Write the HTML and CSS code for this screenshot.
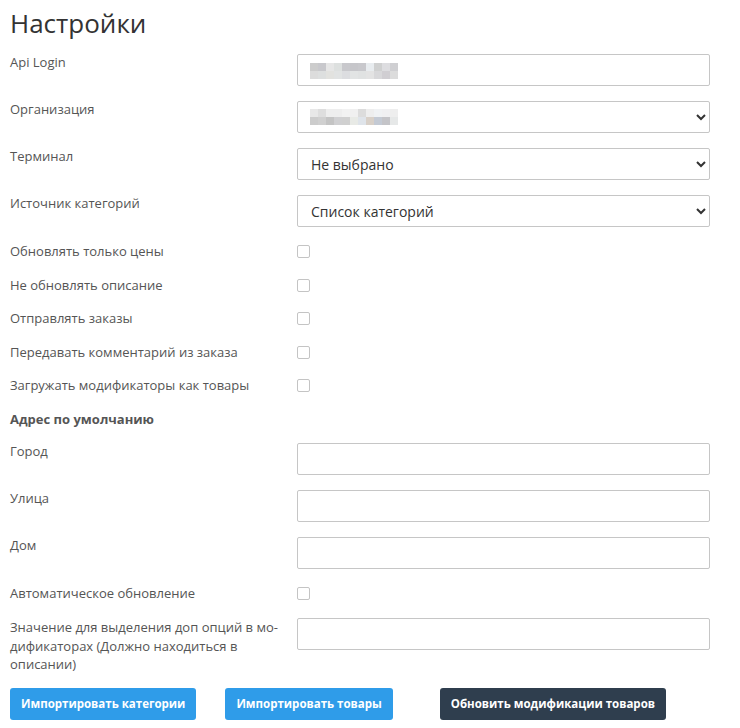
FILE: index.html
```html
<!DOCTYPE html>
<html lang="ru">

<head>
  <meta charset="UTF-8">
  <meta name="viewport" content="width=device-width, initial-scale=1.0">
  <title>Настройки</title>
  <link rel="stylesheet" href="styles.css">
</head>

<body>

  <div class="settings">
    <h1 class="title">Настройки</h1>

    <form class="form">
      <div class="row">
        <label class="label">Api Login</label>
        <div class="field">
          <input class="control" type="text">
          <div class="blur blur-login">
            <div class="blur-line"></div>
            <div class="blur-line"></div>
          </div>
        </div>
      </div>

      <div class="row">
        <label class="label">Организация</label>
        <div class="field">
          <select class="control">
            <option></option>
          </select>
          <div class="blur blur-org">
            <div class="blur-line"></div>
            <div class="blur-line"></div>
          </div>
        </div>
      </div>

      <div class="row">
        <label class="label">Терминал</label>
        <div class="field">
          <select class="control">
            <option>Не выбрано</option>
          </select>
        </div>
      </div>

      <div class="row">
        <label class="label">Источник категорий</label>
        <div class="field">
          <select class="control">
            <option>Список категорий</option>
          </select>
        </div>
      </div>

      <div class="row row-check">
        <label class="label">Обновлять только цены</label>
        <div class="field"><input class="check" type="checkbox"></div>
      </div>
      <div class="row row-check">
        <label class="label">Не обновлять описание</label>
        <div class="field"><input class="check" type="checkbox"></div>
      </div>
      <div class="row row-check">
        <label class="label">Отправлять заказы</label>
        <div class="field"><input class="check" type="checkbox"></div>
      </div>
      <div class="row row-check">
        <label class="label">Передавать комментарий из заказа</label>
        <div class="field"><input class="check" type="checkbox"></div>
      </div>
      <div class="row row-check">
        <label class="label">Загружать модификаторы как товары</label>
        <div class="field"><input class="check" type="checkbox"></div>
      </div>

      <div class="section">Адрес по умолчанию</div>

      <div class="row">
        <label class="label">Город</label>
        <div class="field"><input class="control" type="text"></div>
      </div>
      <div class="row">
        <label class="label">Улица</label>
        <div class="field"><input class="control" type="text"></div>
      </div>
      <div class="row">
        <label class="label">Дом</label>
        <div class="field"><input class="control" type="text"></div>
      </div>

      <div class="row row-check">
        <label class="label">Автоматическое обновление</label>
        <div class="field"><input class="check" type="checkbox"></div>
      </div>

      <div class="row">
        <label class="label label-long">Значение для выделения доп опций в мо&shy;дификаторах (Должно находиться в описании)</label>
        <div class="field"><input class="control" type="text"></div>
      </div>

      <div class="buttons">
        <button class="btn btn-blue btn-cat" type="button">Импортировать категории</button>
        <button class="btn btn-blue btn-goods" type="button">Импортировать товары</button>
        <button class="btn btn-dark" type="button">Обновить модификации товаров</button>
      </div>
    </form>
  </div>

</body>

</html>
```

FILE: styles.css
```css
* {
  margin: 0;
  padding: 0;
  box-sizing: border-box;
}

body {
  font-family: "Open Sans", "Liberation Sans", sans-serif;
  font-size: 13px;
  line-height: 1.42857;
  color: #555;
  background: #fff;
}

.settings {
  padding: 0 10px;
  width: 720px;
}

.title {
  font-size: 26px;
  font-weight: 400;
  line-height: 28px;
  color: #333;
  margin: 9px 0 17px;
}

.row {
  display: grid;
  grid-template-columns: 287px 413px;
  margin-bottom: 15px;
}

.label {
  display: block;
  margin-top: -1px;
}

.label-long {
  margin-top: 0;
  padding-right: 8px;
  hyphens: manual;
}

.field {
  position: relative;
}

.control {
  display: block;
  width: 100%;
  height: 32px;
  border: 1px solid #c6c6c6;
  border-radius: 2px;
  background: #fff;
  padding: 0 13px;
  font-family: "Open Sans", "Liberation Sans", sans-serif;
  font-size: 14px;
  color: #333;
  outline: none;
}

select.control {
  padding: 0 9px;
}

.row-check .label {
  margin-top: 0;
}

.check {
  display: block;
  width: 13px;
  height: 13px;
  margin-top: 3px;
  appearance: none;
  border: 1px solid #c4c4c4;
  border-radius: 2px;
  background: #fff;
}

.section {
  font-weight: 700;
  margin-bottom: 15px;
}

/* pixelated hidden values */
.blur {
  position: absolute;
  left: 13px;
  width: 88px;
}

.blur-login {
  top: 9px;
}

.blur-org {
  top: 8px;
}

.blur-line {
  height: 8px;
}

.blur-login .blur-line:first-child {
  background: linear-gradient(to right,
      #cccccc 0 8px, #c8c8cc 8px 16px, #e6e6e6 16px 24px, #dde0df 24px 32px,
      #c8c8cc 32px 40px, #c6c6ca 40px 48px, #c8c8cc 48px 56px, #e8ecef 56px 64px,
      #cfd0d0 64px 72px, #dddde0 72px 80px, #cfcfd2 80px 88px);
}

.blur-login .blur-line:last-child {
  background: linear-gradient(to right,
      #dcdcdc 0 8px, #dddfdf 8px 16px, #e2e2df 16px 24px, #e1e3e3 24px 32px,
      #dcdde0 32px 40px, #e2e4e4 40px 48px, #e0e2e2 48px 56px, #e3e3e3 56px 64px,
      #d8d8da 64px 72px, #d0ced2 72px 80px, #dcdcdc 80px 88px);
}

.blur-org .blur-line:first-child {
  background: linear-gradient(to right,
      #e8e8e8 0 8px, #dedede 8px 16px, #eeeeee 16px 24px, #eeeeee 24px 32px,
      #f2f2f2 32px 40px, #f0f0f0 40px 48px, #dcdcdc 48px 56px, #eeeeee 56px 64px,
      #f0f2f4 64px 72px, #f0f0f2 72px 80px, #eeeeee 80px 88px);
}

.blur-org .blur-line:last-child {
  background: linear-gradient(to right,
      #cccccc 0 8px, #d0d0d0 8px 16px, #c4c4c4 16px 24px, #d0d0d2 24px 32px,
      #d0d0d0 32px 40px, #e8eae6 40px 48px, #dfe4ea 48px 56px, #d8d0c8 56px 64px,
      #c4cad4 64px 72px, #c4c4c8 72px 80px, #e6e8e8 80px 88px);
}

.buttons {
  display: flex;
  margin-top: -1px;
}

.btn {
  flex: none;
  height: 32px;
  padding: 0 11px;
  border: none;
  border-radius: 3px;
  color: #fff;
  font-family: "Open Sans", "Liberation Sans", sans-serif;
  font-size: 11.5px;
  font-weight: 700;
  white-space: nowrap;
}

.btn-blue {
  background: #2f9ce9;
}

.btn-dark {
  background: #2f3e4e;
}

.btn-cat {
  margin-right: 29px;
}

.btn-goods {
  margin-right: 47px;
}
```
